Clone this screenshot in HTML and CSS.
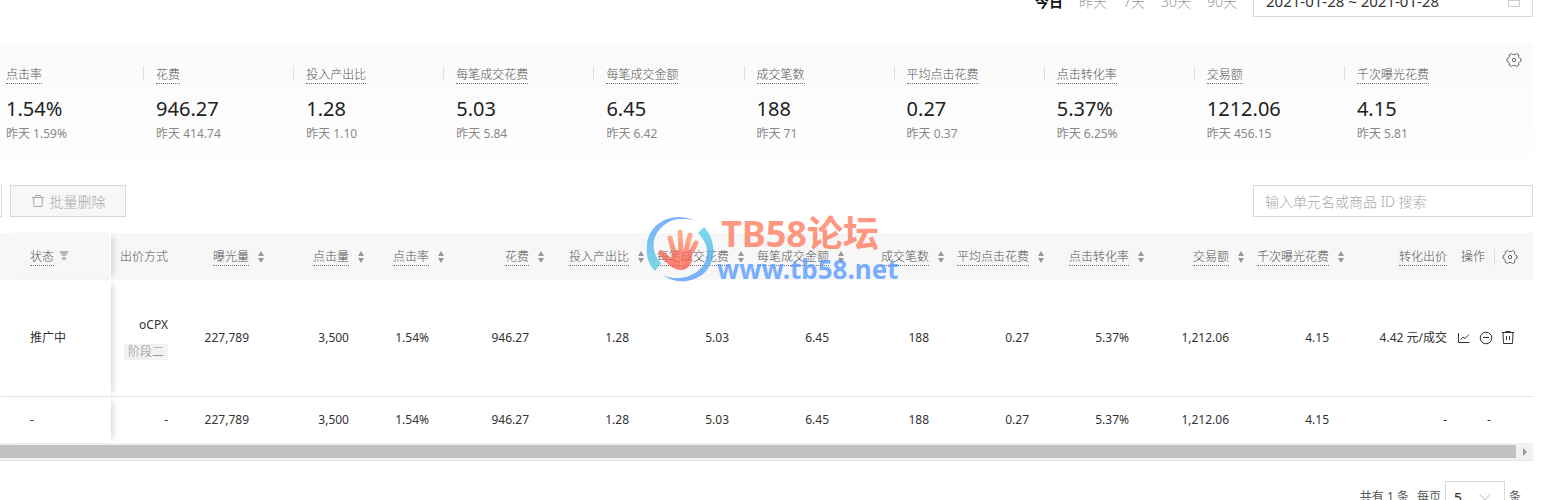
FILE: index.html
```html
<!DOCTYPE html>
<html lang="zh-CN">
<head>
    <meta charset="UTF-8">
    <title>推广单元</title>
    <link rel="stylesheet" href="styles.css">
</head>
<body>
    <svg class="sprite" aria-hidden="true">
        <symbol id="gear" viewBox="0 0 16 16">
            <path d="M5.5 1.5 Q6.3 2.6 8 2.6 Q9.7 2.6 10.5 1.5 L12.8 2.8 Q12.3 4.3 13 5.6 Q13.6 6.6 15 6.8 V9.2 Q13.6 9.4 13 10.4 Q12.3 11.7 12.8 13.2 L10.5 14.5 Q9.7 13.4 8 13.4 Q6.3 13.4 5.5 14.5 L3.2 13.2 Q3.7 11.7 3 10.4 Q2.4 9.4 1 9.2 V6.8 Q2.4 6.6 3 5.6 Q3.7 4.3 3.2 2.8 Z"/>
            <circle cx="8" cy="8" r="1.7"/>
        </symbol>
        <symbol id="sort" viewBox="0 0 6 12">
            <path d="M3 0 L6 5 H0 Z M0 7 H6 L3 12 Z"/>
        </symbol>
        <symbol id="trash" viewBox="0 0 14 14">
            <path d="M1 3.5 H13 M4 3.5 L4.5 1.5 H9.5 L10 3.5 M2.5 3.5 L3 12.5 H11 L11.5 3.5"/>
        </symbol>
    </svg>

    <header class="top-bar">
        <nav class="ranges">
            <a href="#" class="active">今日</a>
            <a href="#">昨天</a>
            <a href="#">7天</a>
            <a href="#">30天</a>
            <a href="#">90天</a>
        </nav>
        <div class="date-box">
            <input type="text" aria-label="日期" value="2021-01-28 ~ 2021-01-28">
            <svg class="calendar" viewBox="0 0 12 12"><path d="M0.5 1.5 H11.5 V11.5 H0.5 Z M0.5 5.5 H11.5"/></svg>
        </div>
    </header>

    <section class="stats">
        <div class="stat"><div class="stat-head"><span class="term">点击率</span></div><strong>1.54%</strong><small>昨天 1.59%</small></div>
        <div class="stat"><div class="stat-head"><span class="term">花费</span></div><strong>946.27</strong><small>昨天 414.74</small></div>
        <div class="stat"><div class="stat-head"><span class="term">投入产出比</span></div><strong>1.28</strong><small>昨天 1.10</small></div>
        <div class="stat"><div class="stat-head"><span class="term">每笔成交花费</span></div><strong>5.03</strong><small>昨天 5.84</small></div>
        <div class="stat"><div class="stat-head"><span class="term">每笔成交金额</span></div><strong>6.45</strong><small>昨天 6.42</small></div>
        <div class="stat"><div class="stat-head"><span class="term">成交笔数</span></div><strong>188</strong><small>昨天 71</small></div>
        <div class="stat"><div class="stat-head"><span class="term">平均点击花费</span></div><strong>0.27</strong><small>昨天 0.37</small></div>
        <div class="stat"><div class="stat-head"><span class="term">点击转化率</span></div><strong>5.37%</strong><small>昨天 6.25%</small></div>
        <div class="stat"><div class="stat-head"><span class="term">交易额</span></div><strong>1212.06</strong><small>昨天 456.15</small></div>
        <div class="stat"><div class="stat-head"><span class="term">千次曝光花费</span></div><strong>4.15</strong><small>昨天 5.81</small></div>
        <button type="button" class="icon-btn stats-gear" aria-label="设置"><svg class="gear"><use href="#gear"/></svg></button>
    </section>

    <div class="toolbar">
        <button type="button" class="btn-cut" aria-label="更多"></button>
        <button type="button" class="btn-delete" disabled>
            <svg class="trash"><use href="#trash"/></svg>批量删除
        </button>
        <input type="text" class="search" aria-label="搜索" placeholder="输入单元名或商品 ID 搜索">
    </div>

    <div class="table-wrap">
        <table>
            <colgroup>
                <col class="w-state"><col class="w-bid"><col class="w-show"><col class="w-num"><col class="w-rate">
                <col class="w-num"><col class="w-num"><col class="w-num"><col class="w-num"><col class="w-num">
                <col class="w-num"><col class="w-num"><col class="w-num"><col class="w-num">
                <col class="w-price"><col class="w-ops">
            </colgroup>
            <thead>
                <tr>
                    <th class="fixed"><span class="term">状态</span><svg class="filter" viewBox="0 0 10 10"><path d="M0 0 H10 L7 5 H3 Z M3 6 H7 V9 H3 Z"/></svg></th>
                    <th>出价方式</th>
                    <th class="sortable"><span class="term">曝光量</span><svg class="sort"><use href="#sort"/></svg></th>
                    <th class="sortable"><span class="term">点击量</span><svg class="sort"><use href="#sort"/></svg></th>
                    <th class="sortable"><span class="term">点击率</span><svg class="sort"><use href="#sort"/></svg></th>
                    <th class="sortable"><span class="term">花费</span><svg class="sort"><use href="#sort"/></svg></th>
                    <th class="sortable"><span class="term">投入产出比</span><svg class="sort"><use href="#sort"/></svg></th>
                    <th class="sortable"><span class="term">每笔成交花费</span><svg class="sort"><use href="#sort"/></svg></th>
                    <th class="sortable"><span class="term">每笔成交金额</span><svg class="sort"><use href="#sort"/></svg></th>
                    <th class="sortable"><span class="term">成交笔数</span><svg class="sort"><use href="#sort"/></svg></th>
                    <th class="sortable"><span class="term">平均点击花费</span><svg class="sort"><use href="#sort"/></svg></th>
                    <th class="sortable"><span class="term">点击转化率</span><svg class="sort"><use href="#sort"/></svg></th>
                    <th class="sortable"><span class="term">交易额</span><svg class="sort"><use href="#sort"/></svg></th>
                    <th class="sortable"><span class="term">千次曝光花费</span><svg class="sort"><use href="#sort"/></svg></th>
                    <th class="price"><span class="term">转化出价</span></th>
                    <th class="ops">
                        <div class="ops-head">操作<button type="button" class="icon-btn" aria-label="设置列"><svg class="gear"><use href="#gear"/></svg></button></div>
                    </th>
                </tr>
            </thead>
            <tbody>
                <tr class="unit">
                    <td class="fixed">推广中</td>
                    <td><div class="bid">oCPX<span class="tag">阶段二</span></div></td>
                    <td>227,789</td>
                    <td>3,500</td>
                    <td>1.54%</td>
                    <td>946.27</td>
                    <td>1.28</td>
                    <td>5.03</td>
                    <td>6.45</td>
                    <td>188</td>
                    <td>0.27</td>
                    <td>5.37%</td>
                    <td>1,212.06</td>
                    <td>4.15</td>
                    <td class="price">4.42 元/成交</td>
                    <td class="ops action-cell">
                        <div class="actions">
                            <button type="button" class="icon-btn" aria-label="报表"><svg viewBox="0 0 14 14"><path d="M1.5 2 V11.5 H12.5 M3.5 8.5 L6 6 L8 7.5 L12 3.5"/></svg></button>
                            <button type="button" class="icon-btn" aria-label="暂停"><svg viewBox="0 0 14 14"><circle cx="7" cy="7" r="5.8"/><path d="M4 6.5 H10"/></svg></button>
                            <button type="button" class="icon-btn" aria-label="删除"><svg viewBox="0 0 14 14"><path d="M1 1.5 H13 M4.5 0.5 H9.5 M2 1.5 L2.5 12.5 H11.5 L12 1.5 M5.5 5 V9 M8.5 5 V9"/></svg></button>
                        </div>
                    </td>
                </tr>
            </tbody>
            <tfoot>
                <tr>
                    <td class="fixed">-</td>
                    <td>-</td>
                    <td>227,789</td>
                    <td>3,500</td>
                    <td>1.54%</td>
                    <td>946.27</td>
                    <td>1.28</td>
                    <td>5.03</td>
                    <td>6.45</td>
                    <td>188</td>
                    <td>0.27</td>
                    <td>5.37%</td>
                    <td>1,212.06</td>
                    <td>4.15</td>
                    <td class="price">-</td>
                    <td class="ops total">-</td>
                </tr>
            </tfoot>
        </table>
        <div class="scrollbar">
            <div class="thumb"></div>
            <svg class="arrow" viewBox="0 0 4 8"><path d="M0 0 L4 4 L0 8 Z"/></svg>
        </div>

        <div class="watermark">
            <svg class="wm-logo" viewBox="0 0 70 66">
                <defs>
                    <linearGradient id="ring" x1="0" y1="0" x2="0" y2="1">
                        <stop offset="0" stop-color="#4f95ff"/>
                        <stop offset="1" stop-color="#4fd0e0"/>
                    </linearGradient>
                    <linearGradient id="swoosh" x1="0" y1="0" x2="0" y2="1">
                        <stop offset="0" stop-color="#4fd0e0"/>
                        <stop offset="1" stop-color="#4f95ff"/>
                    </linearGradient>
                    <linearGradient id="palm" gradientUnits="userSpaceOnUse" x1="0" y1="14" x2="0" y2="54">
                        <stop offset="0" stop-color="#ff9a70"/>
                        <stop offset="1" stop-color="#ff4a48"/>
                    </linearGradient>
                </defs>
                <path fill="url(#ring)" d="M51 5 C28 -6 4 7 2 28 C1 40 3 48 10 55 L16 47 C7 38 6 24 14 14 C23 3 36 0 51 5 Z"/>
                <path fill="url(#swoosh)" d="M59 11 L53 17 C67 31 64 48 50 57 C40 63 29 64 18 59 C31 69 51 67 62 54 C71 42 71 24 59 11 Z"/>
                <g stroke="url(#palm)" stroke-linecap="round" stroke-width="5" fill="none">
                    <path d="M30 40 L25 22"/>
                    <path d="M36 38 L35 16"/>
                    <path d="M40 38 L45 19"/>
                    <path d="M43 42 L51 27"/>
                    <path d="M29 47 L16 37"/>
                </g>
                <path fill="url(#palm)" d="M27 34 L44 34 L47 41 C47 48 43 54 36 54 C29 54 23 49 17 41 L27 42 Z"/>
                <path fill="none" stroke="#ffb030" d="M28 42 C34 42 39 46 35 53 M34 18 L35 22 M44 23 L45 27"/>
            </svg>
            <div class="wm-text">
                <span class="wm-name">TB58论坛</span>
                <span class="wm-url">www.tb58.net</span>
            </div>
        </div>
    </div>

    <footer class="pager">
        <span>共有 1 条</span>
        <label for="pageSize">每页</label>
        <div class="size-box">
            <select id="pageSize">
                <option>5</option>
            </select>
            <svg class="chevron" viewBox="0 0 12 8"><path d="M0.5 1 L6 7 L11.5 1"/></svg>
        </div>
        <span class="unit-text">条</span>
    </footer>
</body>
</html>
```
FILE: styles.css
```css
* {
    box-sizing: border-box;
}

html {
    overflow: hidden;
}

body {
    margin: 0;
    padding-right: 13px;
    background-color: #fff;
    color: #333;
    font-family: "Noto Sans", "Noto Sans CJK SC", sans-serif;
    font-size: 12px;
    line-height: 18px;
}

button,
input,
select {
    font-family: inherit;
    border-radius: 0;
}

.sprite {
    display: none;
}

svg {
    display: block;
    fill: none;
    stroke: #666;
}

.term {
    border-bottom: 1px dotted #777;
}

.icon-btn {
    padding: 0;
    border: none;
    background: none;
    cursor: pointer;
}

.gear {
    width: 16px;
    height: 16px;
}

/* date ranges */
.top-bar {
    display: flex;
    justify-content: flex-end;
    align-items: flex-end;
    gap: 16px;
    height: 17px;
    overflow: hidden;
}

.ranges {
    display: flex;
    gap: 16px;
    font-size: 14px;
    line-height: 30px;
}

.ranges a {
    color: #999;
    font-weight: 300;
    text-decoration: none;
}

.ranges .active {
    color: #111;
    font-weight: bold;
}

.date-box {
    display: flex;
    align-items: center;
    width: 280px;
    height: 32px;
    padding: 0 12px;
    border: 1px solid #d9d9d9;
}

.date-box input {
    flex: 1;
    min-width: 0;
    padding: 0;
    border: none;
    outline: none;
    color: #333;
    font-size: 15px;
}

.calendar {
    width: 12px;
    height: 12px;
    stroke: #ccc;
}

/* summary numbers */
.stats {
    position: relative;
    display: grid;
    grid-template-columns: repeat(10, 1fr);
    margin-top: 26px;
    padding: 23px 26px 18px 6px;
    background: linear-gradient(#fafafa, #fefefe);
}

.stat-head {
    display: flex;
    justify-content: space-between;
    height: 18px;
    color: #555;
    font-weight: 300;
}

.stat-head::after {
    content: "";
    width: 1px;
    height: 14px;
    margin-right: 12px;
    background-color: #e0e0e0;
}

.stat:nth-child(10) .stat-head::after {
    display: none;
}

.stat strong,
.stat small {
    display: block;
}

.stat strong {
    margin-top: 12px;
    color: #222;
    font-size: 20px;
    font-weight: normal;
    line-height: 26px;
}

.stat small {
    margin-top: 3px;
    color: #888;
    font-size: 12px;
}

.stats-gear {
    position: absolute;
    top: 9px;
    right: 11px;
}

/* toolbar */
.toolbar {
    display: flex;
    height: 32px;
    margin-top: 24px;
}

.btn-cut {
    width: 2px;
    padding: 0;
    border: 1px solid #d9d9d9;
    border-left: none;
    background: #fff;
}

.btn-delete {
    display: flex;
    align-items: center;
    justify-content: center;
    gap: 5px;
    width: 116px;
    margin-left: 8px;
    border: 1px solid #d9d9d9;
    background-color: #f7f7f7;
    color: #aaa;
    font-size: 14px;
    font-weight: 300;
}

.trash {
    width: 14px;
    height: 14px;
    stroke: #aaa;
}

.search {
    width: 280px;
    margin-left: auto;
    padding: 0 11px;
    border: 1px solid #d9d9d9;
    font-size: 14px;
    font-weight: 300;
}

.search::placeholder {
    color: #aaa;
}

/* table */
.table-wrap {
    position: relative;
    margin-top: 16px;
}

table {
    width: 100%;
    table-layout: fixed;
    border-collapse: separate;
    border-spacing: 0;
}

.w-state { width: 111px; }
.w-bid { width: 77px; }
.w-show { width: 81px; }
.w-num { width: 100px; }
.w-rate { width: 80px; }
.w-price { width: 108px; }
.w-ops { width: 76px; }

th,
td {
    height: 47px;
    padding: 0 20px 0 0;
    text-align: right;
    white-space: nowrap;
}

th {
    background-color: #f7f7f7;
    color: #555;
    font-weight: 300;
}

.unit td {
    height: 117px;
    border-bottom: 1px solid #e5e5e5;
}

tfoot td {
    height: 46px;
}

.fixed {
    position: relative;
    z-index: 1;
    padding: 0 0 0 30px;
    border-right: 1px solid #fff;
    background-color: #fff;
    box-shadow: 6px 0 6px -4px rgba(0, 0, 0, 0.16);
    text-align: left;
}

th.fixed {
    background-color: #f7f7f7;
}

.filter {
    display: inline-block;
    width: 10px;
    height: 10px;
    margin-left: 5px;
    fill: #bbb;
    stroke: none;
}

.sortable {
    padding-right: 5px;
}

.sort {
    display: inline-block;
    width: 6px;
    height: 12px;
    margin-left: 9px;
    fill: #999;
    stroke: none;
    vertical-align: middle;
}

.price {
    padding-right: 10px;
}

.ops {
    padding: 0 0 0 4px;
    text-align: left;
}

.ops.total {
    padding-left: 30px;
}

.action-cell {
    padding-left: 0;
}

.ops-head {
    display: flex;
    align-items: center;
    gap: 9px;
}

.ops-head .icon-btn {
    padding-left: 7px;
    border-left: 1px solid #ddd;
}

.bid {
    display: flex;
    flex-direction: column;
    align-items: flex-end;
    gap: 10px;
}

.tag {
    padding: 0 4px;
    background-color: #f2f2f2;
    color: #888;
    font-weight: 300;
    line-height: 16px;
}

.actions {
    display: flex;
    gap: 8px;
}

.actions svg {
    width: 14px;
    height: 14px;
    stroke: #333;
}

.scrollbar {
    display: flex;
    align-items: center;
    height: 18px;
    padding-right: 6px;
    border-bottom: 1px solid #e5e5e5;
    background-color: #f1f1f1;
}

.thumb {
    flex: 1;
    height: 13px;
    margin-right: 7px;
    background-color: #c1c1c1;
}

.arrow {
    width: 4px;
    height: 8px;
    fill: #999;
    stroke: none;
}

/* watermark over the table */
.watermark {
    position: absolute;
    z-index: 2;
    top: -17px;
    left: 645px;
    display: flex;
    opacity: 0.75;
    font-weight: bold;
    pointer-events: none;
}

.wm-logo {
    width: 70px;
    height: 66px;
    stroke: none;
}

.wm-text {
    display: flex;
    flex-direction: column;
}

.wm-name {
    padding-left: 6px;
    color: #ff7557;
    font-size: 36px;
    line-height: 36px;
}

.wm-url {
    padding-left: 2px;
    color: #4f95ff;
    font-size: 26px;
    line-height: 34px;
}

/* pager */
.pager {
    display: flex;
    justify-content: flex-end;
    align-items: center;
    height: 32px;
    margin-top: 20px;
    padding-right: 12px;
    color: #555;
}

.pager label {
    margin: 0 4px 0 8px;
}

.size-box {
    position: relative;
    width: 60px;
    height: 32px;
}

.size-box select {
    width: 100%;
    height: 100%;
    padding: 0 8px;
    border: 1px solid #d9d9d9;
    background-color: #fff;
    appearance: none;
    color: #333;
    font-size: 14px;
}

.chevron {
    position: absolute;
    top: 12px;
    right: 14px;
    width: 12px;
    height: 8px;
    stroke: #bbb;
}

.unit-text {
    margin-left: 4px;
}
```
